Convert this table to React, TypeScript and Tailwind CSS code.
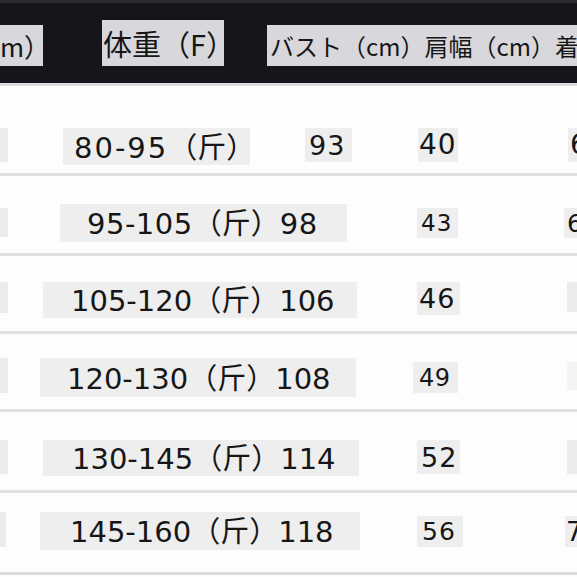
import React from "react";

const num = "font-['DejaVu_Sans','Noto_Sans_CJK_JP',sans-serif]";

function Jin() {
  return <span className="font-['Noto_Sans_CJK_SC',sans-serif] tracking-normal">（斤）</span>;
}

export default function App() {
  return (
    <div className={`w-[577px] h-[577px] overflow-hidden bg-[#fdfdfd] text-[#161616] ${num}`}>
      {/* header */}
      <div className="h-[83px] bg-[#16151b] border-t-[3px] border-[#2b2a30] flex items-start">
        <div className="mt-[22px] w-[43px] h-[41px] bg-[#d8d8dc] overflow-hidden flex items-center">
          <span className="text-[26px] leading-none font-['Noto_Sans_CJK_JP',sans-serif] whitespace-nowrap">m）</span>
        </div>
        <div className="ml-[59px] mt-[17px] w-[122px] h-[46px] bg-[#d8d8dc] overflow-hidden flex items-center pl-[1px]">
          <span className="text-[29px] leading-none font-['Noto_Sans_CJK_JP',sans-serif] whitespace-nowrap">体重（F）</span>
        </div>
        <div className="ml-[43px] mt-[22px] flex-1 h-[41px] bg-[#d8d8dc] overflow-hidden flex items-center pl-[3px]">
          <span className="text-[24px] leading-none font-['Noto_Sans_CJK_JP',sans-serif] whitespace-nowrap">バスト（cm）肩幅（cm）着丈</span>
        </div>
      </div>
      <div className="h-[3px] bg-[#dcdcdc]" />

      {/* row 1 */}
      <div className="h-[90px] flex items-start border-b-[3px] border-[#e2e2e2]">
        <div className="mt-[42px] w-[8px] h-[34px] bg-[#ececec]" />
        <div className="ml-[55px] mt-[42px] w-[187px] h-[37px] bg-[#eeeeee] flex items-center pl-[11px] overflow-hidden">
          <span className="text-[29px] leading-none tracking-[2px] whitespace-nowrap">80-95<Jin /></span>
        </div>
        <div className="ml-[55px] mt-[42px] w-[47px] h-[34px] bg-[#eeeeee] flex items-center pl-[4px] overflow-hidden">
          <span className="text-[27px] leading-none tracking-[1px]">93</span>
        </div>
        <div className="ml-[66px] mt-[42px] w-[40px] h-[34px] bg-[#eeeeee] flex items-center pl-[1px] overflow-hidden">
          <span className="text-[28px] leading-none tracking-[1px] whitespace-nowrap">40</span>
        </div>
        <div className="ml-[110px] mt-[42px] w-[9px] h-[34px] bg-[#eeeeee] flex items-center pl-[2px] overflow-hidden">
          <span className="text-[28px] leading-none">6</span>
        </div>
      </div>

      {/* row 2 */}
      <div className="h-[80px] flex items-start border-b-[3px] border-[#e2e2e2]">
        <div className="mt-[32px] w-[8px] h-[29px] bg-[#ececec]" />
        <div className="ml-[52px] mt-[28px] w-[287px] h-[38px] bg-[#eeeeee] flex items-center pl-[27px] overflow-hidden">
          <span className="text-[29px] leading-none tracking-[0.5px] whitespace-nowrap">95-105<Jin />98</span>
        </div>
        <div className="ml-[70px] mt-[32px] w-[41px] h-[30px] bg-[#eeeeee] flex items-center pl-[4px] overflow-hidden">
          <span className="text-[23px] leading-none tracking-[1px]">43</span>
        </div>
        <div className="ml-[106px] mt-[32px] w-[13px] h-[30px] bg-[#eeeeee] flex items-center pl-[3px] overflow-hidden">
          <span className="text-[25px] leading-none">6</span>
        </div>
      </div>

      {/* row 3 */}
      <div className="h-[78px] flex items-start border-b-[3px] border-[#e2e2e2]">
        <div className="mt-[26px] w-[8px] h-[31px] bg-[#ececec]" />
        <div className="ml-[35px] mt-[26px] w-[314px] h-[36px] bg-[#eeeeee] flex items-center pl-[28px] overflow-hidden">
          <span className="text-[29px] leading-none whitespace-nowrap">105-120<Jin />106</span>
        </div>
        <div className="ml-[60px] mt-[26px] w-[43px] h-[33px] bg-[#eeeeee] flex items-center pl-[2px] overflow-hidden">
          <span className="text-[27px] leading-none tracking-[1px]">46</span>
        </div>
        <div className="ml-[107px] mt-[26px] w-[10px] h-[30px] bg-[#ececec]" />
      </div>

      {/* row 4 */}
      <div className="h-[78px] flex items-start border-b-[3px] border-[#e2e2e2]">
        <div className="mt-[24px] w-[8px] h-[35px] bg-[#ececec]" />
        <div className="ml-[32px] mt-[24px] w-[316px] h-[39px] bg-[#eeeeee] flex items-center pl-[27px] overflow-hidden">
          <span className="text-[29px] leading-none whitespace-nowrap">120-130<Jin />108</span>
        </div>
        <div className="ml-[57px] mt-[28px] w-[45px] h-[31px] bg-[#eeeeee] flex items-center pl-[6px] overflow-hidden">
          <span className="text-[24px] leading-none tracking-[0.5px]">49</span>
        </div>
        <div className="ml-[109px] mt-[28px] w-[10px] h-[28px] bg-[#f4f4f0]" />
      </div>

      {/* row 5 */}
      <div className="h-[81px] flex items-start border-b-[3px] border-[#e2e2e2]">
        <div className="mt-[28px] w-[8px] h-[34px] bg-[#ececec]" />
        <div className="ml-[35px] mt-[28px] w-[316px] h-[36px] bg-[#eeeeee] flex items-center pl-[29px] overflow-hidden">
          <span className="text-[29px] leading-none whitespace-nowrap">130-145<Jin />114</span>
        </div>
        <div className="ml-[58px] mt-[28px] w-[43px] h-[34px] bg-[#eeeeee] flex items-center pl-[4px] overflow-hidden">
          <span className="text-[27px] leading-none tracking-[1px]">52</span>
        </div>
        <div className="ml-[107px] mt-[28px] w-[10px] h-[34px] bg-[#ececec]" />
      </div>

      {/* row 6 */}
      <div className="h-[82px] flex items-start border-b-[3px] border-[#dcdcdc]">
        <div className="mt-[19px] w-[6px] h-[35px] bg-[#ececec]" />
        <div className="ml-[34px] mt-[19px] w-[320px] h-[38px] bg-[#eeeeee] flex items-center pl-[30px] overflow-hidden">
          <span className="text-[29px] leading-none whitespace-nowrap">145-160<Jin />118</span>
        </div>
        <div className="ml-[57px] mt-[23px] w-[46px] h-[31px] bg-[#eeeeee] flex items-center pl-[5px] overflow-hidden">
          <span className="text-[25px] leading-none tracking-[1px]">56</span>
        </div>
        <div className="ml-[102px] mt-[23px] w-[12px] h-[31px] bg-[#eeeeee] flex items-center pl-[1px] overflow-hidden">
          <span className="text-[26px] leading-none">7</span>
        </div>
      </div>
    </div>
  );
}
